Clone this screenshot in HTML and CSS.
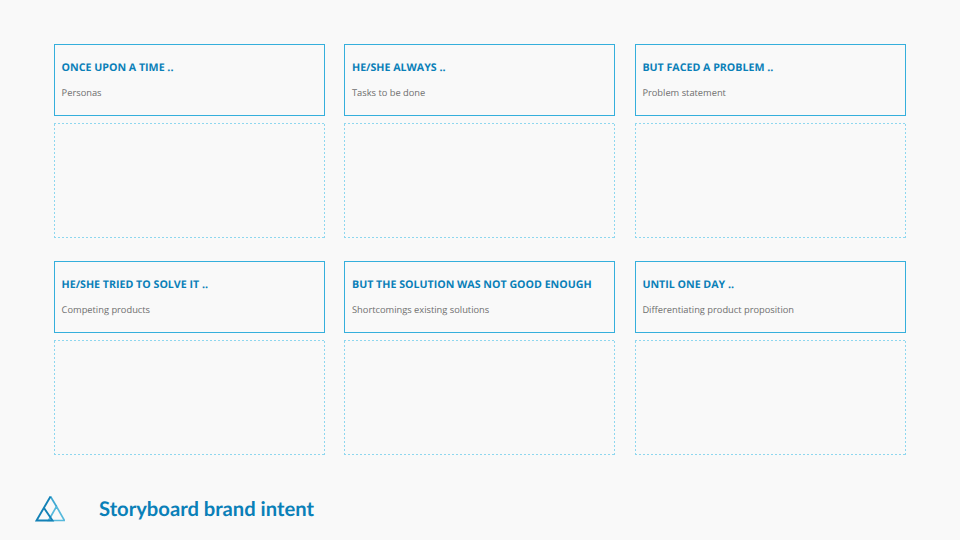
FILE: index.html
```html
<!DOCTYPE html>
<html lang="en">
<head>
<meta charset="utf-8">
<title>Storyboard brand intent</title>
<link rel="stylesheet" href="styles.css">
</head>
<body>
<main class="slide">
  <section class="grid">
    <article class="panel"><header class="card"><h2>ONCE UPON A TIME ..</h2><p>Personas</p></header><div class="drop"></div></article>
    <article class="panel"><header class="card"><h2>HE/SHE ALWAYS ..</h2><p>Tasks to be done</p></header><div class="drop"></div></article>
    <article class="panel"><header class="card"><h2>BUT FACED A PROBLEM ..</h2><p>Problem statement</p></header><div class="drop"></div></article>
    <article class="panel"><header class="card"><h2>HE/SHE TRIED TO SOLVE IT ..</h2><p>Competing products</p></header><div class="drop"></div></article>
    <article class="panel"><header class="card"><h2>BUT THE SOLUTION WAS NOT GOOD ENOUGH</h2><p>Shortcomings existing solutions</p></header><div class="drop"></div></article>
    <article class="panel"><header class="card"><h2>UNTIL ONE DAY ..</h2><p>Differentiating product proposition</p></header><div class="drop"></div></article>
  </section>
  <footer class="footer">
    <svg class="logo" width="30" height="27" viewBox="0 0 30 27" fill="none" aria-hidden="true">
      <path d="M29.5 25.5H13.5L21.5 11.5Z" stroke="#56b9dc" stroke-width="1.7"/>
      <path d="M15.5 1.5L21.5 11.5" stroke="#3fa8d2" stroke-width="1.7"/>
      <path d="M15.5 1.5L1.5 25.5H17.5L9 13" stroke="#1381b6" stroke-width="1.9"/>
    </svg>
    <h1>Storyboard brand intent</h1>
  </footer>
</main>
</body>
</html>
```
FILE: styles.css
```css
* { box-sizing: border-box; margin: 0; padding: 0; }
html, body { width: 960px; height: 540px; overflow: hidden; background: #f9f9f9; }
body { font-family: "Open Sans", sans-serif; text-rendering: geometricPrecision; }
.slide { width: 960px; height: 540px; padding: 44px 54px 0 35px; display: flex; flex-direction: column; }
.grid { margin-left: 19px; display: grid; grid-template-columns: repeat(3, 271px); column-gap: 19.4px; row-gap: 23px; }
.panel { display: flex; flex-direction: column; gap: 7px; }
.card { height: 72px; border: 1px solid #35afdc; padding: 15px 7px 0 6.6px; }
.card h2 { font-size: 10.65px; line-height: 16px; font-weight: 700; color: #0a80b8; white-space: nowrap; }
.card p { margin-top: 9px; font-size: 9.3px; line-height: 16px; color: #6e6e6e; white-space: nowrap; }
.drop {
  height: 115px;
  background:
    repeating-linear-gradient(90deg, #8ed7ef 0 2px, transparent 2px 4px) top / 100% 1px no-repeat,
    repeating-linear-gradient(90deg, #8ed7ef 0 2px, transparent 2px 4px) bottom / 100% 1px no-repeat,
    repeating-linear-gradient(0deg, #8ed7ef 0 2px, transparent 2px 4px) left / 1px 100% no-repeat,
    repeating-linear-gradient(0deg, #8ed7ef 0 2px, transparent 2px 4px) right / 1px 100% no-repeat;
}
.footer { margin-top: 40px; display: flex; align-items: center; gap: 34px; }
.logo { flex: none; }
.footer h1 { font-family: "Lato", sans-serif; font-size: 20.2px; line-height: 26px; font-weight: 700; color: #0a80b8; white-space: nowrap; }
```
